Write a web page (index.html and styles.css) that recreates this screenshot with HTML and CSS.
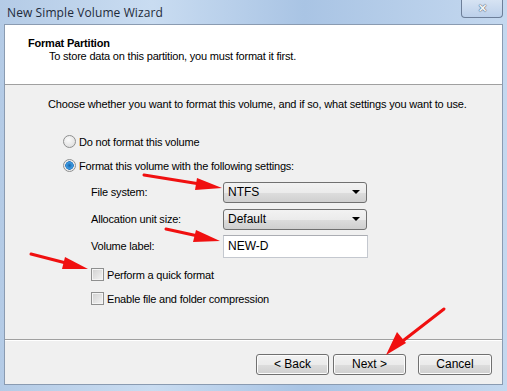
FILE: index.html
```html
<!DOCTYPE html>
<html lang="en">
<head>
    <meta charset="UTF-8">
    <title>New Simple Volume Wizard</title>
    <link rel="stylesheet" href="styles.css">
</head>
<body>
    <div class="window">
        <div class="titlebar">
            <span class="title">New Simple Volume Wizard</span>
            <div class="close-btn">&#x2715;</div>
        </div>
        <div class="client">
            <div class="header">
                <h1>Format Partition</h1>
                <p>To store data on this partition, you must format it first.</p>
            </div>
            <div class="body">
                <p class="intro">Choose whether you want to format this volume, and if so, what settings you want to use.</p>
                <div class="radio-row">
                    <span class="radio"></span>
                    <span>Do not format this volume</span>
                </div>
                <div class="radio-row">
                    <span class="radio checked"></span>
                    <span>Format this volume with the following settings:</span>
                </div>
                <div class="settings">
                    <div class="field">
                        <label>File system:</label>
                        <div class="select">NTFS<span class="caret"></span></div>
                    </div>
                    <div class="field">
                        <label>Allocation unit size:</label>
                        <div class="select">Default<span class="caret"></span></div>
                    </div>
                    <div class="field">
                        <label>Volume label:</label>
                        <div class="textbox">NEW-D</div>
                    </div>
                    <div class="check-row">
                        <span class="checkbox"></span>
                        <span>Perform a quick format</span>
                    </div>
                    <div class="check-row">
                        <span class="checkbox"></span>
                        <span>Enable file and folder compression</span>
                    </div>
                </div>
            </div>
            <div class="footer">
                <div class="btn">&lt; Back</div>
                <div class="btn">Next &gt;</div>
                <div class="btn cancel">Cancel</div>
            </div>
        </div>

        <!-- red arrows drawn over the screenshot -->
        <svg class="arrows" width="507" height="391" viewBox="0 0 507 391">
            <g stroke="#f01010" stroke-width="3" stroke-linecap="round" fill="#f01010">
                <line x1="144" y1="175" x2="200" y2="184"/>
                <polygon stroke="none" points="222,188 197,178 195,190"/>
                <line x1="166" y1="229" x2="198" y2="236"/>
                <polygon stroke="none" points="220,241 196,230 193,242"/>
                <line x1="31" y1="254" x2="66" y2="263"/>
                <polygon stroke="none" points="88,269 65,257 62,269"/>
                <line x1="444" y1="309" x2="404" y2="340"/>
                <polygon stroke="none" points="386,355 397,332 406,343"/>
            </g>
        </svg>
    </div>
</body>
</html>
```

FILE: styles.css
```css
body {
    margin: 0;
    font-family: "Liberation Sans", Arial, sans-serif;
    font-size: 11px;
    color: #000;
}
.window {
    position: relative;
    width: 507px;
    height: 391px;
    background: linear-gradient(90deg, #b4cbe6 0%, #c9dcf1 30%, #a9c4e4 60%, #c4d8ef 100%);
    display: flex;
    flex-direction: column;
}
.titlebar {
    height: 24px;
    display: flex;
    align-items: flex-start;
    justify-content: space-between;
}
.title {
    font-family: "Open Sans", "Liberation Sans", sans-serif;
    font-size: 12px;
    color: #1e2a3a;
    padding: 4px 0 0 7px;
    letter-spacing: 0.1px;
}
.close-btn {
    width: 40px;
    height: 17px;
    margin-right: 4px;
    border: 1px solid #6d7f99;
    border-top: none;
    border-radius: 0 0 4px 4px;
    background: linear-gradient(#d6e3f3, #bcd0ea);
    color: #f4f6f9;
    text-align: center;
    font-size: 11px;
    font-weight: bold;
    line-height: 16px;
    text-shadow: 0 0 1px #3b4a5e, 0 0 1px #3b4a5e;
}
.client {
    margin: 0 4px 0 4px;
    width: 497px;
    height: 359px;
    border: 1px solid #8a9bb1;
    background: #f0f0f0;
    display: flex;
    flex-direction: column;
    letter-spacing: -0.2px;
}
.header {
    height: 59px;
    background: #fff;
    border-bottom: 1px solid #a0a0a0;
}
.header h1 {
    margin: 12px 0 0 23px;
    font-size: 11px;
    font-weight: bold;
}
.header p {
    margin: 1px 0 0 44px;
}
.body {
    height: 254px;
    border-bottom: 1px solid #a0a0a0;
    box-shadow: 0 1px 0 #fff;
}
.intro {
    margin: 13px 0 0 43px;
    letter-spacing: -0.17px;
}
.radio-row {
    display: flex;
    align-items: center;
    gap: 3px;
    margin-left: 58px;
    height: 13px;
}
.intro + .radio-row {
    margin-top: 25px;
}
.radio-row + .radio-row {
    margin-top: 11px;
}
.radio {
    width: 11px;
    height: 11px;
    border-radius: 50%;
    border: 1px solid #8e8f8f;
    background: radial-gradient(circle at 40% 35%, #fbfbfb, #d8d8d8);
}
.radio.checked {
    background: radial-gradient(circle, #1b62a8 0, #3a9ae0 3px, #2f78c0 4px, #e8e8e8 4.5px, #f6f6f6 6px);
}
.settings {
    margin: 9px 0 0 86px;
}
.field {
    display: flex;
    align-items: center;
    height: 22px;
    margin-bottom: 5px;
}
.field label {
    width: 132px;
}
.select {
    width: 138px;
    height: 19px;
    border: 1px solid #707070;
    border-radius: 3px;
    padding-left: 4px;
    background: linear-gradient(#f2f2f2 0%, #ebebeb 50%, #dddddd 51%, #cfcfcf 100%);
    display: flex;
    align-items: center;
    justify-content: space-between;
    font-size: 12px;
    letter-spacing: 0;
}
.caret {
    width: 0;
    height: 0;
    border-left: 4px solid transparent;
    border-right: 4px solid transparent;
    border-top: 4px solid #000;
    margin-right: 6px;
}
.textbox {
    width: 139px;
    height: 21px;
    border: 1px solid #c4c8cf;
    border-top-color: #abadb3;
    background: #fff;
    padding-left: 4px;
    display: flex;
    align-items: center;
    font-size: 12px;
    letter-spacing: 0;
}
.check-row {
    display: flex;
    align-items: center;
    gap: 3px;
    height: 13px;
    margin-top: 11px;
}
.check-row + .check-row {
    margin-top: 11px;
}
.checkbox {
    width: 11px;
    height: 11px;
    border: 1px solid #8e8f8f;
    background: linear-gradient(135deg, #d0d0d0, #f4f4f4);
    box-shadow: inset 0 0 0 1px #f4f4f4;
}
.footer {
    flex: 1;
    display: flex;
    align-items: flex-start;
    padding: 14px 10px 0 0;
    justify-content: flex-end;
    gap: 4px;
}
.btn {
    width: 71px;
    height: 19px;
    border: 1px solid #707070;
    border-radius: 3px;
    background: linear-gradient(#f2f2f2 0%, #ebebeb 50%, #dddddd 51%, #cfcfcf 100%);
    box-shadow: inset 0 0 0 1px #fcfcfc;
    text-align: center;
    line-height: 19px;
    font-size: 12px;
    letter-spacing: 0;
}
.btn.cancel {
    width: 72px;
    margin-left: 8px;
}
.arrows {
    position: absolute;
    left: 0;
    top: 0;
    pointer-events: none;
}
```
